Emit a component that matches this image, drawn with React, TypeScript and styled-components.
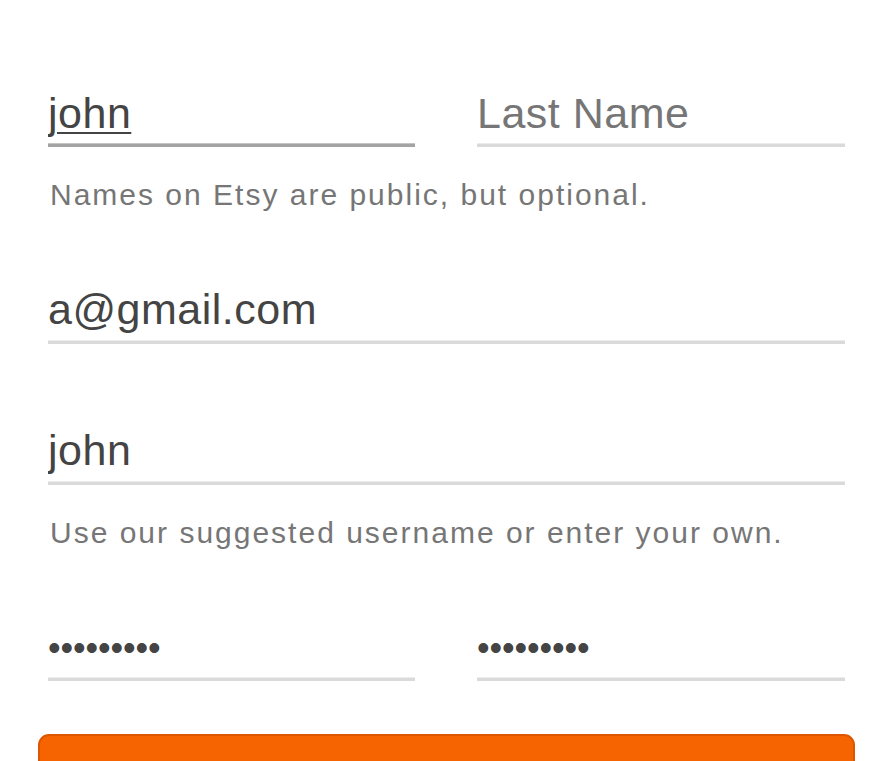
import React from "react";
import styled, { createGlobalStyle } from "styled-components";

const Global = createGlobalStyle`
  html, body { margin: 0; padding: 0; background: #ffffff; }
  body { font-family: "Liberation Sans", Arial, sans-serif; overflow: hidden; }
  * { box-sizing: border-box; }
`;

const Page = styled.form`
  width: 893px;
  height: 761px;
  padding: 86px 48px 0;
  display: flex;
  flex-direction: column;
  overflow: hidden;
`;

const Group = styled.div<{ $gap: number }>`
  display: flex;
  flex-direction: column;
  margin-bottom: ${(p) => p.$gap}px;
`;

const Row = styled.div`
  display: grid;
  grid-template-columns: 367px 368px;
  justify-content: space-between;
`;

const Input = styled.input<{ $focused?: boolean; $underlined?: boolean }>`
  display: block;
  width: 100%;
  height: 61px;
  padding: 0 0 4px;
  margin: 0;
  border: none;
  border-bottom: 3px solid ${(p) => (p.$focused ? "#a3a3a3" : "#dadada")};
  box-shadow: inset 0 -1px 0 ${(p) => (p.$focused ? "#c4c4c4" : "#ececec")};
  outline: none;
  background: transparent;
  font-family: "Liberation Sans", Arial, sans-serif;
  font-size: 43px;
  letter-spacing: 0.5px;
  color: #444444;
  text-decoration: ${(p) => (p.$underlined ? "underline" : "none")};
  text-decoration-thickness: 2px;
  text-underline-offset: 4px;
  &::placeholder { color: #767676; opacity: 1; }
  &[type="password"] { letter-spacing: -0.1px; font-size: 36px; padding-bottom: 2px; }
`;

const Help = styled.p`
  margin: 31px 0 0 2px;
  font-size: 30px;
  line-height: 1.15;
  letter-spacing: 2px;
  color: #767676;
`;

const Submit = styled.button`
  margin: 0 -10px;
  height: 60px;
  flex-shrink: 0;
  border: 2px solid #dc5700;
  border-radius: 11px;
  background: #f56400;
`;

export default function App() {
  return (
    <>
      <Global />
      <Page onSubmit={(e) => e.preventDefault()}>
        <Group $gap={70}>
          <Row>
            <Input readOnly value="john" $focused $underlined />
            <Input readOnly placeholder="Last Name" />
          </Row>
          <Help>Names on Etsy are public, but optional.</Help>
        </Group>
        <Group $gap={80}>
          <Input readOnly value="a@gmail.com" />
        </Group>
        <Group $gap={70}>
          <Input readOnly value="john" />
          <Help>Use our suggested username or enter your own.</Help>
        </Group>
        <Group $gap={53}>
          <Row>
            <Input type="password" readOnly value="123456789" />
            <Input type="password" readOnly value="123456789" />
          </Row>
        </Group>
        <Submit type="submit" aria-label="Register" />
      </Page>
    </>
  );
}
